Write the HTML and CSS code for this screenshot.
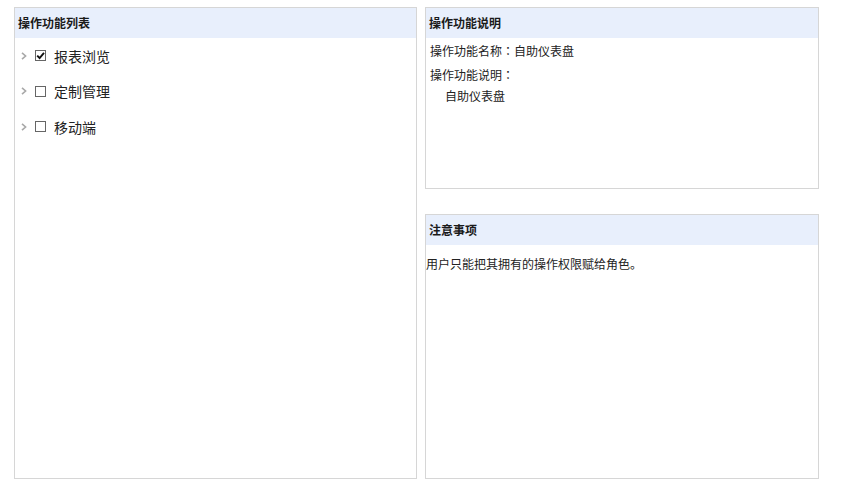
FILE: index.html
```html
<!DOCTYPE html>
<html lang="zh-CN">
<head>
<meta charset="utf-8">
<title>操作功能</title>
<link rel="stylesheet" href="styles.css">
</head>
<body>
<div class="page">
  <section class="panel panel-list">
    <div class="panel-head">操作功能列表</div>
    <ul class="tree">
      <li class="tree-row">
        <svg class="chev" width="6" height="8" viewBox="0 0 6 8"><path d="M1 0.8 L4.6 4 L1 7.2" fill="none" stroke="#a8a8a8" stroke-width="1.6"/></svg>
        <span class="cb checked"><svg width="9" height="9" viewBox="0 0 9 9"><path d="M1.2 4.6 L3.6 7 L8 1.8" fill="none" stroke="#111" stroke-width="1.9"/></svg></span>
        <span class="label">报表浏览</span>
      </li>
      <li class="tree-row">
        <svg class="chev" width="6" height="8" viewBox="0 0 6 8"><path d="M1 0.8 L4.6 4 L1 7.2" fill="none" stroke="#a8a8a8" stroke-width="1.6"/></svg>
        <span class="cb"></span>
        <span class="label">定制管理</span>
      </li>
      <li class="tree-row">
        <svg class="chev" width="6" height="8" viewBox="0 0 6 8"><path d="M1 0.8 L4.6 4 L1 7.2" fill="none" stroke="#a8a8a8" stroke-width="1.6"/></svg>
        <span class="cb"></span>
        <span class="label">移动端</span>
      </li>
    </ul>
  </section>
  <div class="side">
    <section class="panel panel-desc">
      <div class="panel-head">操作功能说明</div>
      <div class="desc-body">
        <p class="line">操作功能名称<span class="colon" lang="zh-TW">：</span>自助仪表盘</p>
        <p class="line line-2">操作功能说明<span class="colon" lang="zh-TW">：</span></p>
        <p class="line line-indent">自助仪表盘</p>
      </div>
    </section>
    <section class="panel panel-note">
      <div class="panel-head">注意事项</div>
      <p class="note">用户只能把其拥有的操作权限赋给角色。</p>
    </section>
  </div>
</div>
</body>
</html>
```

FILE: styles.css
```css
* { box-sizing: border-box; }
html, body {
  margin: 0;
  padding: 0;
  background: #fff;
}
body {
  font-family: "Noto Sans CJK SC", "Noto Sans", "Liberation Sans", sans-serif;
  font-size: 12px;
  color: #222;
}
.page {
  display: flex;
  gap: 8px;
  padding: 7px 0 0 14px;
}
.panel {
  border: 1px solid #d6d6d6;
  background: #fff;
}
.panel-list {
  width: 403px;
  height: 472px;
}
.side {
  width: 394px;
  display: flex;
  flex-direction: column;
  gap: 25px;
}
.panel-desc { height: 182px; }
.panel-note { height: 265px; }
.panel-head {
  height: 30px;
  line-height: 30px;
  background: #e8effc;
  font-weight: bold;
  font-size: 12px;
  color: #1a1a1a;
  padding-left: 3px;
}
.tree {
  list-style: none;
  margin: 0;
  padding: 0;
}
.tree-row {
  height: 35.5px;
  display: flex;
  align-items: center;
  padding-left: 6px;
}
.chev {
  display: block;
  margin-right: 8px;
}
.cb {
  width: 11px;
  height: 11px;
  border: 1px solid #666;
  display: flex;
  align-items: center;
  justify-content: center;
  margin-right: 8px;
  background: #fff;
}
.cb svg { display: block; }
.label {
  font-size: 14px;
  color: #222;
}
.desc-body {
  padding: 5px 0 0 4px;
}
.line {
  margin: 0;
  line-height: 16px;
  font-size: 12px;
}
.colon {
  font-family: "Noto Sans CJK TC", "Noto Sans CJK SC", sans-serif;
}
.line-2 { margin-top: 8px; }
.line-indent {
  margin-top: 5px;
  padding-left: 15px;
}
.note {
  margin: 11px 0 0 0;
  line-height: 16px;
  font-size: 12px;
}
```
